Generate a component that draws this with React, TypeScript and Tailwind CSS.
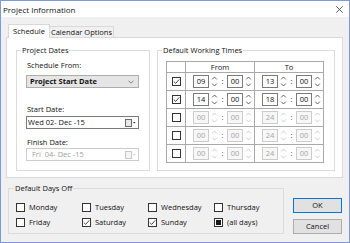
import React from "react";

type CS = "on" | "off" | "mixed";

function Box({ state, disabled }: { state: CS; disabled?: boolean }) {
  return (
    <span
      className={
        "w-[9px] h-[9px] border flex items-center justify-center shrink-0 " +
        (disabled ? "border-[#bcbcbc] bg-white" : "border-[#333333] bg-white")
      }
    >
      {state === "on" && (
        <svg width="7" height="7" viewBox="0 0 7 7">
          <path d="M0.8 3.6 L2.7 5.4 L6.2 1.4" stroke="#333" strokeWidth="0.9" fill="none" />
        </svg>
      )}
      {state === "mixed" && <span className="w-[5px] h-[5px] bg-[#1a1a1a]" />}
    </span>
  );
}

function Arrows({ disabled }: { disabled?: boolean }) {
  const c = disabled ? "#c8c8c8" : "#555555";
  return (
    <svg width="7" height="13" viewBox="0 0 7 13" className="shrink-0">
      <path d="M1.2 4.4 L3.5 2 L5.8 4.4" stroke={c} strokeWidth="0.9" fill="none" />
      <path d="M1.2 8.6 L3.5 11 L5.8 8.6" stroke={c} strokeWidth="0.9" fill="none" />
    </svg>
  );
}

function Field({ v, disabled }: { v: string; disabled?: boolean }) {
  return (
    <span
      className={
        "w-[16px] h-[13px] border flex items-center justify-center shrink-0 " +
        (disabled ? "border-[#cccccc] bg-[#f7f7f7] text-[#a6a6a6]" : "border-[#7a7a7a] bg-white text-[#111]")
      }
    >
      {v}
    </span>
  );
}

function TimePair({ a, b, disabled }: { a: string; b: string; disabled?: boolean }) {
  return (
    <div className="flex items-center pl-[7px]">
      <Field v={a} disabled={disabled} />
      <span className="ml-[2px]">
        <Arrows disabled={disabled} />
      </span>
      <span className={"ml-[3px] w-[3px] text-center " + (disabled ? "text-[#444]" : "text-[#111]")}>:</span>
      <span className="ml-[3px]">
        <Field v={b} disabled={disabled} />
      </span>
      <span className="ml-[2px]">
        <Arrows disabled={disabled} />
      </span>
    </div>
  );
}

function CalIcon({ disabled }: { disabled?: boolean }) {
  const c = disabled ? "#c8c8c8" : "#6b6b6b";
  return (
    <svg width="11" height="8" viewBox="0 0 11 8" className="shrink-0">
      <rect x="0.5" y="0.5" width="6" height="7" fill={disabled ? "#f4f4f4" : "#e8e8e8"} stroke={c} strokeWidth="1" />
      <path d="M8 3 L10.5 3 L9.25 4.6 Z" fill={disabled ? "#c8c8c8" : "#333"} />
    </svg>
  );
}

const rows: { c: CS; a: string; b: string; d: string; e: string; dis: boolean }[] = [
  { c: "on", a: "09", b: "00", d: "13", e: "00", dis: false },
  { c: "on", a: "14", b: "00", d: "18", e: "00", dis: false },
  { c: "off", a: "00", b: "00", d: "24", e: "00", dis: true },
  { c: "off", a: "00", b: "00", d: "24", e: "00", dis: true },
  { c: "off", a: "00", b: "00", d: "24", e: "00", dis: true },
];

const days: { n: string; s: CS }[] = [
  { n: "Monday", s: "off" },
  { n: "Tuesday", s: "off" },
  { n: "Wednesday", s: "off" },
  { n: "Thursday", s: "off" },
  { n: "Friday", s: "off" },
  { n: "Saturday", s: "on" },
  { n: "Sunday", s: "on" },
  { n: "(all days)", s: "mixed" },
];

export default function App() {
  return (
    <div className="w-[350px] h-[243px] border border-[#7c9ad6] bg-[#f0f0f0] font-['Open_Sans',sans-serif] text-[7.5px] leading-[11px] text-[#111] overflow-hidden">
      {/* title bar */}
      <div className="h-[16px] bg-white flex items-center justify-between pl-[2px] pr-[6px]">
        <span className="text-[8px]">Project Information</span>
        <svg width="7" height="7" viewBox="0 0 7 7">
          <path d="M0.3 0.3 L6.7 6.7 M6.7 0.3 L0.3 6.7" stroke="#333" strokeWidth="0.8" />
        </svg>
      </div>

      <div className="px-[5px] pt-[7px]">
        {/* tabs */}
        <div className="flex items-end h-[13px] pl-[2px]">
          <div className="relative z-10 h-[14px] -mb-[1px] w-[42px] bg-white border border-b-0 border-[#d9d9d9] flex items-center justify-center pb-[1px]">
            Schedule
          </div>
          <div className="h-[11px] w-[64px] bg-[#f0f0f0] border border-l-0 border-b-0 border-[#d9d9d9] flex items-center justify-center">
            Calendar Options
          </div>
        </div>

        {/* panel */}
        <div className="w-[337px] h-[141px] bg-white border border-[#d9d9d9] flex pl-[9px] pt-[12px]">
          {/* Project Dates */}
          <div className="relative w-[134px] h-[121px] border border-[#dcdcdc] pl-[9px]">
            <span className="absolute -top-[6px] left-[4px] bg-white px-[1px]">Project Dates</span>
            <div className="mt-[9px] ml-[1px]">Schedule From:</div>
            <div className="mt-[4px] w-[113px] h-[13px] bg-[#e5e5e5] border border-[#adadad] flex items-center justify-between pl-[3px] pr-[4px]">
              <span className="font-bold">Project Start Date</span>
              <svg width="6" height="4" viewBox="0 0 6 4">
                <path d="M0.5 0.7 L3 3.2 L5.5 0.7" stroke="#666" strokeWidth="0.8" fill="none" />
              </svg>
            </div>
            <div className="mt-[16px] ml-[1px]">Start Date:</div>
            <div className="mt-[1px] w-[113px] h-[13px] bg-white border border-[#7a7a7a] flex items-center justify-between pl-[1px] pr-[2px]">
              <span className="whitespace-pre">Wed 02- Dec -15</span>
              <CalIcon />
            </div>
            <div className="mt-[8px] ml-[1px]">Finish Date:</div>
            <div className="w-[113px] h-[13px] bg-white border border-[#cccccc] flex items-center justify-between pl-[5px] pr-[2px] text-[#a0a0a0]">
              <span className="whitespace-pre">Fri  04- Dec -15</span>
              <CalIcon disabled />
            </div>
          </div>

          {/* Default Working Times */}
          <div className="relative ml-[7px] w-[178px] h-[121px] border border-[#dcdcdc] pl-[8px]">
            <span className="absolute -top-[6px] left-[4px] bg-white px-[1px]">Default Working Times</span>
            <div className="mt-[10px] w-[158px] border-l border-t border-[#a9a9a9]">
              <div className="flex h-[11px]">
                <div className="w-[19px] border-r border-b border-[#a9a9a9]" />
                <div className="w-[69px] border-r border-b border-[#a9a9a9] flex items-center justify-center">From</div>
                <div className="w-[69px] border-r border-b border-[#a9a9a9] flex items-center justify-center">To</div>
              </div>
              {rows.map((r, i) => (
                <div key={i} className="flex h-[18px]">
                  <div className="w-[19px] border-r border-b border-[#a9a9a9] flex items-center justify-center">
                    <Box state={r.c} />
                  </div>
                  <div className="w-[69px] border-r border-b border-[#a9a9a9] flex items-center">
                    <TimePair a={r.a} b={r.b} disabled={r.dis} />
                  </div>
                  <div className="w-[69px] border-r border-b border-[#a9a9a9] flex items-center">
                    <TimePair a={r.d} b={r.e} disabled={r.dis} />
                  </div>
                </div>
              ))}
            </div>
          </div>
        </div>

        {/* bottom */}
        <div className="flex mt-[10px] ml-[2px]">
          <div className="relative w-[276px] h-[46px] border border-[#dcdcdc] pl-[7px] pt-[11px]">
            <span className="absolute -top-[6px] left-[5px] bg-[#f0f0f0] px-[1px]">Default Days Off</span>
            <div className="grid grid-cols-[66px_66px_66px_66px] grid-rows-[15px_15px]">
              {days.map((d) => (
                <div key={d.n} className="flex items-center gap-[4px]">
                  <Box state={d.s} />
                  <span>{d.n}</span>
                </div>
              ))}
            </div>
          </div>
          <div className="ml-[9px] mt-[10px] flex flex-col gap-[6px]">
            <div className="w-[49px] h-[15px] bg-[#e1e1e1] border border-[#0078d7] flex items-center justify-center">OK</div>
            <div className="w-[49px] h-[15px] bg-[#e1e1e1] border border-[#adadad] flex items-center justify-center">Cancel</div>
          </div>
        </div>
      </div>
    </div>
  );
}
